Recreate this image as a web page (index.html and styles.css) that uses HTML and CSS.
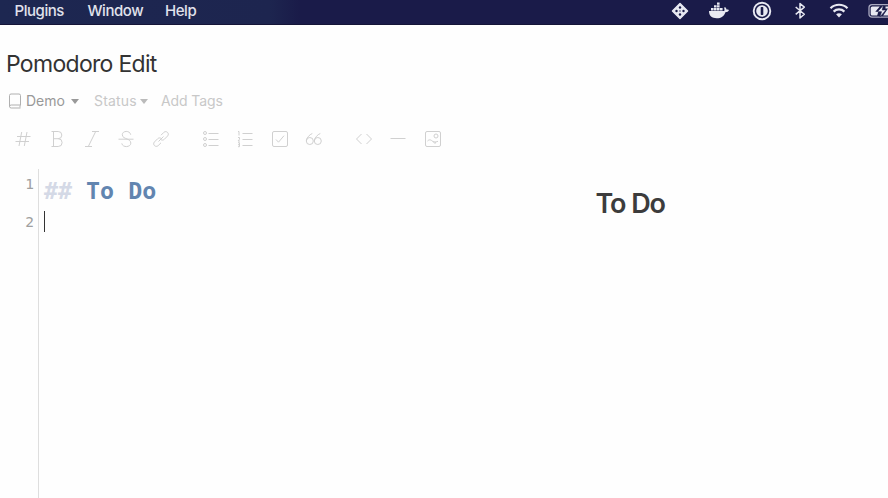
FILE: index.html
```
<!DOCTYPE html>
<html lang="en">
<head>
<meta charset="utf-8">
<title>Pomodoro Edit</title>
<link rel="stylesheet" href="styles.css">
</head>
<body>
<header class="menubar">
  <nav class="menus"><span class="m-plugins">Plugins</span><span class="m-window">Window</span><span class="m-help">Help</span></nav>
  <div class="tray">
    <svg width="20" height="20" viewBox="0 0 20 20"><path d="M10 2.500 17.500 10 10 17.500 2.500 10Z" fill="#e8e9f2" stroke="#e8e9f2" stroke-width="1.500" stroke-linejoin="round"/><g fill="#1a1b49"><circle cx="10" cy="6.500" r="1.200"/><circle cx="6.500" cy="10" r="1.200"/><circle cx="13.500" cy="10" r="1.200"/><circle cx="10" cy="13.500" r="1.200"/><circle cx="10" cy="10" r=".7"/></g></svg>
    <svg class="whale" width="22" height="20" viewBox="0 0 22 20"><g fill="#e8e9f2"><path d="M1 10h15.200c.5-1 .3-2.300-.1-3l.8-.9c1 .7 1.500 1.600 1.600 2.500 1 0 1.900.1 2.500.5-.6 1.600-1.900 2.100-3.600 2.100-1.400 4-4.200 6-8.700 6C4 17.200 1 15 1 10Z"/><path d="M3 7h2.600v2.500H3zM6 7h2.600v2.500H6zM9 7h2.600v2.500H9zM12 7h2.600v2.500H12zM6 4.200h2.600v2.400H6zM9 4.200h2.600v2.400H9zM9 1.600h2.600v2.200H9z"/></g></svg>
    <svg width="20" height="20" viewBox="0 0 20 20"><circle cx="10" cy="10" r="8.300" fill="none" stroke="#e8e9f2" stroke-width="1.900"/><circle cx="10" cy="10" r="5.800" fill="#e8e9f2"/><rect x="8.700" y="6" width="2.600" height="8" rx=".7" fill="#1a1b49"/></svg>
    <svg width="16" height="20" viewBox="0 0 16 20"><path d="m3.700 6 8.600 7.300L8 17V2.500l4.300 3.600-8.600 7.300" fill="none" stroke="#e8e9f2" stroke-width="1.500" stroke-linejoin="round"/></svg>
    <svg class="wifi" width="20" height="20" viewBox="0 0 20 20"><g fill="none" stroke="#e8e9f2" stroke-width="2.200"><path d="M1.500 7.200c4.700-4.600 12.300-4.600 17 0"/><path d="M4.600 10.600c3-2.900 7.800-2.900 10.800 0"/></g><path d="m10 16.400-2.900-3.200c1.700-1.400 4.100-1.400 5.800 0Z" fill="#e8e9f2"/></svg>
    <svg width="20" height="20" viewBox="0 0 20 20"><rect x="1" y="3.700" width="26" height="12.500" rx="3" fill="none" stroke="#aaaac0" stroke-width="1.300"/><path d="M4.300 5.500h7.500l-4.500 5.300h3L9.200 14.500H4.300q-1.600 0-1.600-1.600V7.100Q2.700 5.500 4.300 5.500Z" fill="#e8e9f2"/><path d="m15.500 4-6 6.700h4l-1.600 5.300 6.100-7h-3.800Z" fill="#e8e9f2" stroke="#1a1b49" stroke-width=".6"/><path d="M20 5.500h-2.500v2h2.500l-4.800 7H20Z" fill="#e8e9f2"/></svg>
  </div>
</header>
<main>
  <h1>Pomodoro Edit</h1>
  <div class="meta">
    <svg class="book" width="14" height="16" viewBox="0 0 14 16" fill="none" stroke="#b0b0b0"><path d="M12.500 12.500V2.500q0-1.500-1.500-1.500H3Q1.500 1 1.500 2.500v10.800q0 1.700 1.700 1.700h9.300M1.500 13.500q0-1.500 1.700-1.500h9.300M12 12.500v2"/></svg>
    <span class="demo">Demo</span><i class="caret"></i>
    <span class="status">Status</span><i class="caret light"></i>
    <span class="tags">Add Tags</span>
  </div>
  <div class="toolbar">
    <div class="group">
      <svg viewBox="0 0 18 18"><path d="M7.700 2 5 16M13 2l-2.700 14M3 6.500h13.500M1.500 11.500H15"/></svg>
      <svg viewBox="0 0 18 18"><path d="M3.500 1.500h6.700a3.600 3.600 0 0 1 0 7.200H5.500M10.200 8.700a3.900 3.900 0 0 1 0 7.800H3.500M5.500 1.500v15"/></svg>
      <svg viewBox="0 0 18 18"><path d="M9 1.500h7M2 16.500h7M12.700 1.500 5.300 16.500"/></svg>
      <svg viewBox="0 0 18 18"><path d="M13.700 4.700C13 .2 5.300.5 5.300 4.700c0 2.800 2.700 3.400 5 4.400M4.800 13.400c.7 4.500 9 4 9-.2 0-2.300-1.600-3.300-3.500-4.100M1.500 9.200h15"/></svg>
      <svg viewBox="0 0 18 18"><path d="m6.500 11.500 5-5M9 5.200l2.800-2.800c2.500-2.400 6.200 1.200 3.700 3.700L12.300 9.300c-1 1-2.400 1-3.400.3M9 12.800l-2.800 2.800c-2.500 2.400-6.200-1.200-3.700-3.700l3.200-3.200c1-1 2.400-1 3.400-.3"/></svg>
    </div>
    <div class="group">
      <svg viewBox="0 0 18 18"><circle cx="3" cy="3" r="1.500"/><circle cx="3" cy="9" r="1.500"/><circle cx="3" cy="15" r="1.500"/><path d="M6.500 3.500h10M6.500 9.500h10M6.500 15.500h10"/></svg>
      <svg viewBox="0 0 18 18"><path d="M2 1.500h1v4M2 7.500h1.500v1.700L2 11h2M2 12.700h1.500v4H2m0-2h1.500M6.500 3.500h10M6.500 9.500h10M6.500 15.500h10"/></svg>
      <svg viewBox="0 0 18 18"><rect x="1.500" y="1.500" width="15" height="15" rx="1.500"/><path d="m5 9.500 2.500 2.700L13 5.700"/></svg>
      <svg viewBox="0 0 18 18"><circle cx="4.800" cy="11" r="3.500"/><circle cx="12.800" cy="11" r="3.500"/><path d="M7.300 3.500C4.500 4.500 1.500 8 1.300 11M15.300 3.500C12.500 4.500 9.500 8 9.300 11"/></svg>
    </div>
    <div class="group">
      <svg viewBox="0 0 18 18"><path d="M6.500 4 1.500 9l5 5M11.500 4l5 5-5 5"/></svg>
      <svg viewBox="0 0 18 18"><path d="M1.500 8.500h15"/></svg>
      <svg viewBox="0 0 18 18"><rect x="1.500" y="1.500" width="15" height="15" rx="1.500"/><circle cx="12" cy="6" r="2"/><path d="M3.500 11c2-2 3.500-1 5 .2 2 1.600 3.700.2 5.500.2M9 11.500l2 2 1-1.500"/></svg>
    </div>
  </div>
  <div class="workspace">
    <section class="editor">
      <div class="gutter"><span class="first">1</span><span>2</span></div>
      <div class="code"><div class="line"><span class="hash">##</span> To Do</div><div class="cursor"></div></div>
    </section>
    <section class="preview"><h2>To Do</h2></section>
  </div>
</main>
</body>
</html>
```
FILE: styles.css
```
* { box-sizing: border-box; }
body {
  margin: 0;
  height: 498px;
  overflow: hidden;
  background: #fefefe;
  font-family: Inter, sans-serif;
  display: flex;
  flex-direction: column;
}
.menubar {
  height: 25px;
  flex: none;
  display: flex;
  justify-content: space-between;
  background: linear-gradient(90deg, #1d2751 0, #1d254f 270px, #1a1b49 300px);
  border-bottom: 1px solid #151538;
  color: #e0e2ec;
  overflow: hidden;
}
.menus { display: flex; padding-left: 14.5px; font-size: 15px; font-weight: 500; line-height: 21px; letter-spacing: -.45px; white-space: nowrap; }
.m-plugins { width: 73px; }
.m-window { width: 77.5px; }
.tray { display: flex; gap: 20px; padding-top: 1px; }
.tray svg { flex: none; }
.tray .whale { margin: 0 2px 0 -2px; }
.tray .wifi { margin: 0 -1px 0 1px; }
main { flex: 1; display: flex; flex-direction: column; }
h1 { margin: 24px 0 0 6px; font-size: 23px; font-weight: 400; line-height: 30px; letter-spacing: -.7px; color: #333; }
.meta { display: flex; align-items: center; height: 20px; margin-top: 12px; padding-left: 8px; font-size: 14px; line-height: 20px; white-space: nowrap; }
.demo { width: 40px; margin-left: 4px; color: #999; letter-spacing: 0; }
.caret { margin-left: 4.5px; border: 4px solid transparent; border-top: 5px solid #999; border-bottom: 0; }
.status { width: 43px; margin-left: 15.5px; color: #c8c8c8; letter-spacing: .2px; }
.caret.light { margin-left: 3px; border-top-color: #bbb; }
.tags { margin-left: 13px; color: #c8c8c8; letter-spacing: -.1px; }
.toolbar { display: flex; gap: 15px; height: 36px; margin-top: 10px; padding-left: 5.5px; align-items: center; }
.group { display: flex; gap: 16.5px; padding: 0 8.25px; }
.group + .group svg { margin-left: .4px; margin-right: -.4px; }
.group svg { width: 18px; height: 18px; fill: none; stroke: #d0d0d0; stroke-width: 1; }
.workspace { flex: 1; display: flex; margin-top: 12px; }
.editor { width: 550px; display: flex; font-family: "DejaVu Sans Mono", monospace; }
.gutter { width: 39px; padding-right: 4px; border-right: 1px solid #dedede; display: flex; flex-direction: column; align-items: flex-end; color: #a0a0a0; font-size: 14.5px; line-height: 36px; }
.gutter .first { height: 35px; line-height: 31px; }
.code { padding: 2px 0 0 5px; }
.line { font-size: 23.3px; font-weight: 700; line-height: 40px; white-space: pre; color: #6285b0; }
.hash { color: #d4d9e6; }
.cursor { width: 1px; height: 21px; background: #333; }
.preview { flex: 1; padding: 17px 0 0 45.5px; }
h2 { margin: 0; font-size: 27px; font-weight: 600; line-height: 36px; letter-spacing: -1.1px; color: #3c3c3c; }
```
